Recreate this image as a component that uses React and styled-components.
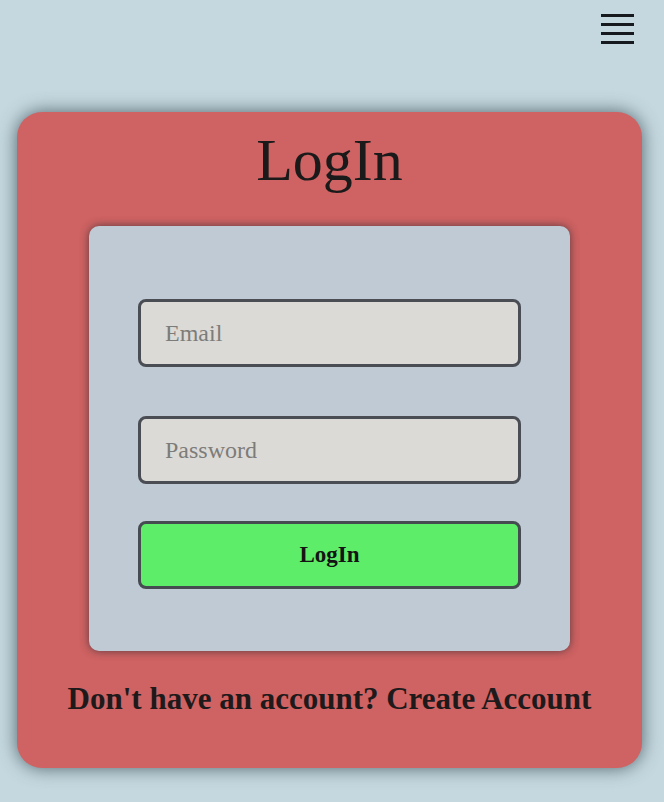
import React from 'react'
import styled, { createGlobalStyle } from 'styled-components';

const GlobalStyle = createGlobalStyle`
  body {
    margin: 0;
    background-color: #c5d8df;
    font-family: "Liberation Serif", "DejaVu Serif", serif;
  }
`;

export default function App() {
  return (
    <>
      <GlobalStyle />
      <Page>
        <Header>
          <Burger aria-label="menu">
            <Line />
            <Line />
            <Line />
            <Line />
          </Burger>
        </Header>
        <Card>
          <Title>LogIn</Title>
          <FormBox>
            <Input type="email" placeholder="Email" />
            <Input type="password" placeholder="Password" gap={49} />
            <Button gap={37}>LogIn</Button>
          </FormBox>
          <Footer>Don't have an account? Create Account</Footer>
        </Card>
      </Page>
    </>
  )
}

const Page = styled.div`
  display: flex;
  flex-direction: column;
  min-height: 802px;
`;

const Header = styled.div`
  display: flex;
  justify-content: flex-end;
  height: 112px;
  padding: 14px 30px 0 0;
  box-sizing: border-box;
`;

const Burger = styled.button`
  display: flex;
  flex-direction: column;
  gap: 6px;
  width: 33px;
  height: 30px;
  padding: 0;
  border: none;
  background: transparent;
  cursor: pointer;
`;

const Line = styled.span`
  display: block;
  width: 33px;
  height: 3px;
  background-color: #161a1f;
`;

const Card = styled.div`
  display: flex;
  flex-direction: column;
  align-items: center;
  width: 625px;
  height: 656px;
  margin-left: 17px;
  box-sizing: border-box;
  background-color: #cf6262;
  border-radius: 25px;
  box-shadow: 0 0 18px rgba(50, 70, 80, 0.8);
`;

const Title = styled.h1`
  margin: 14px 0 0;
  height: 100px;
  font-size: 60px;
  font-weight: normal;
  line-height: 68px;
  color: #1b1a1a;
`;

const FormBox = styled.div`
  display: flex;
  flex-direction: column;
  width: 481px;
  height: 425px;
  padding: 73px 49px 0;
  box-sizing: border-box;
  background-color: #c0cad4;
  border-radius: 10px;
  box-shadow: 0 0 8px rgba(40, 40, 50, 0.7);
`;

const Input = styled.input`
  height: 68px;
  margin-top: ${p => p.gap || 0}px;
  padding: 0 24px;
  box-sizing: border-box;
  border: 3px solid #4a4e54;
  border-radius: 8px;
  background-color: #dcdad6;
  font-family: "Liberation Serif", serif;
  font-size: 24px;
  color: #333;
  outline: none;
  &::placeholder {
    color: #7c7c7a;
  }
`;

const Button = styled.button`
  height: 68px;
  margin-top: ${p => p.gap || 0}px;
  box-sizing: border-box;
  border: 3px solid #454b50;
  border-radius: 8px;
  background-color: #5eed68;
  font-family: "Liberation Serif", serif;
  font-size: 23px;
  font-weight: bold;
  color: #141414;
  cursor: pointer;
`;

const Footer = styled.p`
  margin: 30px 0 0;
  font-size: 31px;
  font-weight: bold;
  color: #1e1a1b;
`;
